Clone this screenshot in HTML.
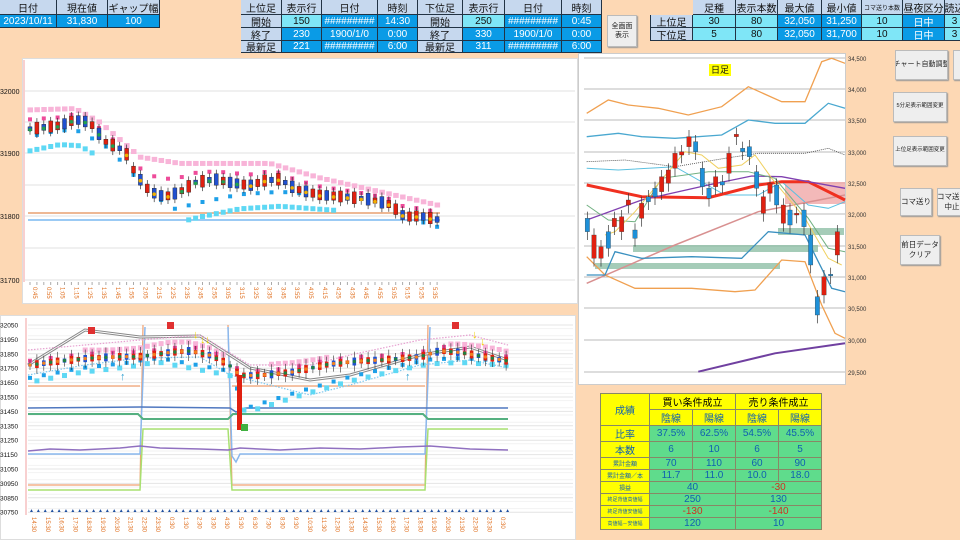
<!DOCTYPE html>
<html><head><meta charset="utf-8"><style>
*{margin:0;padding:0;box-sizing:border-box}
body{width:960px;height:540px;overflow:hidden;background:#fdd8b4;font-family:"Liberation Sans","Noto Sans CJK JP",sans-serif;position:relative}
.c{position:absolute;display:flex;align-items:center;justify-content:center;font-size:10px;border-right:1px solid #234;border-bottom:1px solid #234;white-space:nowrap;overflow:hidden}
.h{background:#c6d8ee;color:#111}
.b{background:#0a9be6;color:#fff}
.l{background:#7fe6f7;color:#111}
.btn{position:absolute;background:#eeeeee;border:1px solid #bbb;box-shadow:1px 1px 1px #999;font-size:8px;display:flex;align-items:center;justify-content:center;text-align:center;line-height:1.3;color:#222;white-space:nowrap;overflow:hidden}
svg{position:absolute;left:0;top:0}
.t td{border:1px solid #886;text-align:center;font-size:10px;padding:0;white-space:nowrap}
</style></head><body>
<div class="c h" style="left:0;top:0;width:57px;height:15px">日付</div>
<div class="c h" style="left:57px;top:0;width:51px;height:15px">現在値</div>
<div class="c h" style="left:108px;top:0;width:52px;height:15px">ギャップ幅</div>
<div class="c b" style="left:0;top:15px;width:57px;height:13px">2023/10/11</div>
<div class="c b" style="left:57px;top:15px;width:51px;height:13px">31,830</div>
<div class="c b" style="left:108px;top:15px;width:52px;height:13px">100</div>
<div class="c h" style="left:241px;top:0;width:41px;height:15px">上位足</div>
<div class="c h" style="left:282px;top:0;width:40px;height:15px">表示行</div>
<div class="c h" style="left:322px;top:0;width:56px;height:15px">日付</div>
<div class="c h" style="left:378px;top:0;width:40px;height:15px">時刻</div>
<div class="c h" style="left:418px;top:0;width:45px;height:15px">下位足</div>
<div class="c h" style="left:463px;top:0;width:42px;height:15px">表示行</div>
<div class="c h" style="left:505px;top:0;width:57px;height:15px">日付</div>
<div class="c h" style="left:562px;top:0;width:40px;height:15px">時刻</div>
<div class="c h" style="left:241px;top:15px;width:41px;height:13px">開始</div>
<div class="c h" style="left:241px;top:28px;width:41px;height:13px">終了</div>
<div class="c h" style="left:241px;top:41px;width:41px;height:12px">最新足</div>
<div class="c l" style="left:282px;top:15px;width:40px;height:13px">150</div>
<div class="c b" style="left:282px;top:28px;width:40px;height:13px">230</div>
<div class="c b" style="left:282px;top:41px;width:40px;height:12px">221</div>
<div class="c b" style="left:322px;top:15px;width:56px;height:13px">#########</div>
<div class="c b" style="left:322px;top:28px;width:56px;height:13px">1900/1/0</div>
<div class="c b" style="left:322px;top:41px;width:56px;height:12px">#########</div>
<div class="c b" style="left:378px;top:15px;width:40px;height:13px">14:30</div>
<div class="c b" style="left:378px;top:28px;width:40px;height:13px">0:00</div>
<div class="c b" style="left:378px;top:41px;width:40px;height:12px">6:00</div>
<div class="c h" style="left:418px;top:15px;width:45px;height:13px">開始</div>
<div class="c h" style="left:418px;top:28px;width:45px;height:13px">終了</div>
<div class="c h" style="left:418px;top:41px;width:45px;height:12px">最新足</div>
<div class="c l" style="left:463px;top:15px;width:42px;height:13px">250</div>
<div class="c b" style="left:463px;top:28px;width:42px;height:13px">330</div>
<div class="c b" style="left:463px;top:41px;width:42px;height:12px">311</div>
<div class="c b" style="left:505px;top:15px;width:57px;height:13px">#########</div>
<div class="c b" style="left:505px;top:28px;width:57px;height:13px">1900/1/0</div>
<div class="c b" style="left:505px;top:41px;width:57px;height:12px">#########</div>
<div class="c b" style="left:562px;top:15px;width:40px;height:13px">0:45</div>
<div class="c b" style="left:562px;top:28px;width:40px;height:13px">0:00</div>
<div class="c b" style="left:562px;top:41px;width:40px;height:12px">6:00</div>
<div class="btn" style="left:607px;top:15px;width:30px;height:32px;font-size:7px">全画面<br>表示</div>
<div class="c h" style="left:693px;top:0;width:43px;height:15px">足種</div>
<div class="c h" style="left:736px;top:0;width:42px;height:15px">表示本数</div>
<div class="c h" style="left:778px;top:0;width:44px;height:15px">最大値</div>
<div class="c h" style="left:822px;top:0;width:40px;height:15px">最小値</div>
<div class="c h" style="left:862px;top:0;width:41px;height:15px;font-size:6px">コマ送り本数</div>
<div class="c h" style="left:903px;top:0;width:42px;height:15px">昼夜区分</div>
<div class="c h" style="left:945px;top:0;width:20px;height:15px">読込</div>
<div class="c h" style="left:650px;top:15px;width:43px;height:13px;border-left:1px solid #234">上位足</div>
<div class="c h" style="left:650px;top:28px;width:43px;height:13px;border-left:1px solid #234">下位足</div>
<div class="c l" style="left:693px;top:15px;width:43px;height:13px">30</div>
<div class="c l" style="left:693px;top:28px;width:43px;height:13px">5</div>
<div class="c l" style="left:736px;top:15px;width:42px;height:13px">80</div>
<div class="c l" style="left:736px;top:28px;width:42px;height:13px">80</div>
<div class="c b" style="left:778px;top:15px;width:44px;height:13px">32,050</div>
<div class="c b" style="left:778px;top:28px;width:44px;height:13px">32,050</div>
<div class="c b" style="left:822px;top:15px;width:40px;height:13px">31,250</div>
<div class="c b" style="left:822px;top:28px;width:40px;height:13px">31,700</div>
<div class="c l" style="left:862px;top:15px;width:41px;height:13px">10</div>
<div class="c l" style="left:862px;top:28px;width:41px;height:13px">10</div>
<div class="c b" style="left:903px;top:15px;width:42px;height:13px">日中</div>
<div class="c b" style="left:903px;top:28px;width:42px;height:13px">日中</div>
<div class="c l" style="left:945px;top:15px;width:20px;height:13px">3</div>
<div class="c l" style="left:945px;top:28px;width:20px;height:13px">3</div>

<div style="position:absolute;left:22px;top:58px;width:556px;height:246px;background:#fff;border:1px solid #ddd"></div>
<div style="position:absolute;left:0;top:315px;width:576px;height:225px;background:#fff;border:1px solid #ddd"></div>
<div style="position:absolute;left:578px;top:53px;width:268px;height:332px;background:#fff;border:1px solid #ccc"></div>

<svg id="s" width="960" height="540" font-family="Liberation Sans" font-size="7">
<g stroke="#e2e2e2" stroke-width="1">
<line x1="25" y1="91" x2="575" y2="91"/><line x1="25" y1="122" x2="575" y2="122"/><line x1="25" y1="153" x2="575" y2="153"/><line x1="25" y1="185" x2="575" y2="185"/><line x1="25" y1="216" x2="575" y2="216"/><line x1="25" y1="248" x2="575" y2="248"/><line x1="25" y1="280" x2="575" y2="280"/>
</g>
<line x1="24" y1="60" x2="24" y2="282" stroke="#f2a0a0"/>
<g fill="#111"><text x="0" y="94">32000</text><text x="0" y="156">31900</text><text x="0" y="219">31800</text><text x="0" y="283">31700</text></g>
<line x1="28" y1="213" x2="440" y2="213" stroke="#e8a070" stroke-width="1.5"/>
<line x1="28" y1="220" x2="440" y2="220" stroke="#7ab8f0" stroke-width="1.5"/>
<g id="top"></g>
<g id="bgrid" stroke="#e4e4e4"></g>
<line x1="26" y1="318" x2="26" y2="515" stroke="#f2a0a0"/>
<g fill="none" stroke-width="1.2">
<path d="M28,386 L140,386 M28,485 L140,485 L143,325 M228,325 L232,485 L425,485 L428,325 M232,386 L425,386" stroke="#f0a070"/>
<path d="M28,490 L140,490 L143,429 L228,429 L232,490 L425,490 L428,429 L508,429" stroke="#a8e070" stroke-width="1.5"/>
<path d="M28,454 L140,454 L145,327 M228,327 L232,456 L236,462 L240,454 L425,454 L430,327" stroke="#8ab8ee" stroke-width="1.5"/>
<path d="M28,408 L140,407 L230,408 L236,412 L245,408 L508,408" stroke="#5078c0" stroke-width="1.5"/>
<path d="M28,414 L138,414 L143,419 L228,419 L233,414 L423,414 L428,419 L508,419" stroke="#55b080" stroke-width="2"/>
<path d="M28,451 L50,449 L80,450 L120,448 L140,446 L160,448 L200,449 L228,450 L240,448 L280,450 L320,448 L360,449 L400,447 L430,446 L470,449 L508,450" stroke="#9070c0" stroke-width="1.5"/>
<path d="M28,365 L85,330 L140,337 L200,336 L250,368 L310,380 L350,375 L420,355 L470,347 L508,360" stroke="#888" stroke-width="3"/>
<path d="M28,365 L85,330 L140,337 L200,336 L250,368 L310,380 L350,375 L420,355 L470,347 L508,360" stroke="#fff" stroke-width="1"/>
<path d="M28,350 L85,345 L140,340 L200,335 L250,365 L310,365 L350,355 L420,340 L470,335 L508,345" stroke="#e6a0d0" stroke-dasharray="1.5,1.5"/>
<path d="M28,375 L85,365 L140,358 L200,357 L230,375 L310,395 L350,385 L420,365 L470,360 L508,368" stroke="#80c8ee" stroke-dasharray="1.5,1.5"/>
</g>
<g id="bot"></g>
<g stroke="#bbb"><line x1="584" y1="58" x2="845" y2="58"/><line x1="584" y1="89" x2="845" y2="89"/><line x1="584" y1="120" x2="845" y2="120"/><line x1="584" y1="152" x2="845" y2="152"/><line x1="584" y1="183" x2="845" y2="183"/><line x1="584" y1="214" x2="845" y2="214"/><line x1="584" y1="246" x2="845" y2="246"/><line x1="584" y1="277" x2="845" y2="277"/><line x1="584" y1="308" x2="845" y2="308"/><line x1="584" y1="340" x2="845" y2="340"/><line x1="584" y1="372" x2="845" y2="372"/></g>
<g fill="#333" font-size="6"><text x="848" y="61">34,500</text><text x="848" y="92">34,000</text><text x="848" y="123">33,500</text><text x="848" y="155">33,000</text><text x="848" y="186">32,500</text><text x="848" y="217">32,000</text><text x="848" y="249">31,500</text><text x="848" y="280">31,000</text><text x="848" y="311">30,500</text><text x="848" y="343">30,000</text><text x="848" y="375">29,500</text></g>
<rect x="785" y="182" width="60" height="22" fill="#f0a8a8" opacity=".8"/>
<rect x="633" y="245" width="185" height="7" fill="#8fbfa6" opacity=".8"/>
<rect x="595" y="263" width="185" height="6" fill="#8fbfa6" opacity=".8"/>
<rect x="778" y="228" width="66" height="7" fill="#8fbfa6" opacity=".8"/>
<g fill="none" id="rl"></g>
<rect x="709" y="64" width="22" height="12" fill="#ffff00"/><text x="711" y="73" font-size="9" fill="#111">日足</text>
<g id="rc"></g>
</svg>

<div class="btn" style="left:895px;top:50px;width:53px;height:30px;font-size:7px">チャート自動調整</div>
<div class="btn" style="left:953px;top:50px;width:12px;height:30px"></div>
<div class="btn" style="left:893px;top:92px;width:54px;height:30px;font-size:5.5px">5分足表示範囲変更</div>
<div class="btn" style="left:893px;top:136px;width:54px;height:30px;font-size:5.5px">上位足表示範囲変更</div>
<div class="btn" style="left:900px;top:188px;width:32px;height:28px;font-size:7.5px">コマ送り</div>
<div class="btn" style="left:937px;top:188px;width:30px;height:28px;font-size:7.5px">コマ送り<br>中止</div>
<div class="btn" style="left:900px;top:235px;width:40px;height:30px;font-size:7.5px">前日データ<br>クリア</div>

<table class="t" style="position:absolute;left:600px;top:393px;width:222px;border-collapse:collapse;background:#ffff00">
<tr style="height:11px"><td rowspan="2" style="width:49px;color:#1060b0">成績</td><td colspan="2">買い条件成立</td><td colspan="2">売り条件成立</td></tr>
<tr style="height:12px;color:#1060b0"><td>陰線</td><td>陽線</td><td>陰線</td><td>陽線</td></tr>
<tr style="height:12px;color:#1060b0"><td>比率</td><td style="background:#5fdc8c">37.5%</td><td style="background:#5fdc8c">62.5%</td><td style="background:#5fdc8c">54.5%</td><td style="background:#5fdc8c">45.5%</td></tr>
<tr style="height:12px;color:#1060b0"><td>本数</td><td style="background:#5fdc8c">6</td><td style="background:#5fdc8c">10</td><td style="background:#5fdc8c">6</td><td style="background:#5fdc8c">5</td></tr>
<tr style="height:12px;color:#1060b0"><td style="font-size:6px">累計金額</td><td style="background:#5fdc8c">70</td><td style="background:#5fdc8c">110</td><td style="background:#5fdc8c">60</td><td style="background:#5fdc8c">90</td></tr>
<tr style="height:11px;color:#1060b0"><td style="font-size:6px">累計金額／本</td><td style="background:#5fdc8c">11.7</td><td style="background:#5fdc8c">11.0</td><td style="background:#5fdc8c">10.0</td><td style="background:#5fdc8c">18.0</td></tr>
<tr style="height:12px;color:#1060b0"><td style="font-size:6px">損益</td><td colspan="2" style="background:#5fdc8c">40</td><td colspan="2" style="background:#5fdc8c;color:#d03020">-30</td></tr>
<tr style="height:12px;color:#1060b0"><td style="font-size:5px">終足背値高値幅</td><td colspan="2" style="background:#5fdc8c">250</td><td colspan="2" style="background:#5fdc8c">130</td></tr>
<tr style="height:12px;color:#1060b0"><td style="font-size:5px">終足背値安値幅</td><td colspan="2" style="background:#5fdc8c;color:#d03020">-130</td><td colspan="2" style="background:#5fdc8c;color:#d03020">-140</td></tr>
<tr style="height:11px;color:#1060b0"><td style="font-size:5px">高値幅－安値幅</td><td colspan="2" style="background:#5fdc8c">120</td><td colspan="2" style="background:#5fdc8c">10</td></tr>
</table>

<script>
var NS="http://www.w3.org/2000/svg";
function el(p,t,a,txt){var e=document.createElementNS(NS,t);for(var k in a)e.setAttribute(k,a[k]);if(txt)e.textContent=txt;p.appendChild(e);return e;}
function interp(pts,x){for(var i=0;i<pts.length-1;i++){if(x>=pts[i][0]&&x<=pts[i+1][0]){var t=(x-pts[i][0])/(pts[i+1][0]-pts[i][0]);return pts[i][1]+t*(pts[i+1][1]-pts[i][1]);}}return pts[pts.length-1][1];}
var g=document.getElementById('top'),s=document.getElementById('s');
var mid=[[30,31940],[60,31945],[75,31955],[90,31950],[105,31920],[125,31905],[135,31870],[150,31840],[165,31832],[180,31840],[195,31855],[215,31860],[230,31855],[250,31850],[265,31858],[280,31860],[295,31845],[320,31835],[345,31832],[370,31828],[390,31820],[405,31800],[420,31802],[440,31795]];
var upl=[[30,31970],[75,31972],[100,31950],[140,31895],[180,31885],[230,31885],[270,31885],[320,31862],[380,31840],[440,31818]];
var dnl=[[30,31920],[60,31930],[80,31928],[110,31900],[150,31830],[175,31805],[200,31815],[240,31828],[280,31832],[340,31825],[380,31815],[410,31790],[440,31775]];
function Y(p){return 91+(32000-p)*0.63;}
for(var i=0;i<60;i++){var x=30+i*6.9;if(x>442)break;var m=interp(mid,x);var ym=Y(m);var u=interp(upl,x),d=interp(dnl,x);
 el(g,'rect',{x:x-2.5,y:Y(u)-2.5,width:5.5,height:5,fill:'#f8b4d8'});
 if(i%2==0)el(g,'rect',{x:x-2,y:Y((u+m)/2)-2,width:4,height:4,fill:'#ee4c9a'});
 if(i%2==1)el(g,'rect',{x:x-2,y:Y(d+8)-2,width:4,height:4,fill:'#1ea0e8'});
 if(i<10||(i>22&&i<45)) el(g,'rect',{x:x-2.5,y:Y(d-15)-2.5,width:5,height:5,fill:'#5ed8f4'});
 var h=4+8*Math.abs(Math.sin(i*1.7));var up=Math.sin(i*2.3)>0;
 el(g,'line',{x1:x,y1:ym-h/2-4,x2:x,y2:ym+h/2+4,stroke:'#333','stroke-width':.7});
 el(g,'rect',{x:x-2,y:ym-h/2,width:4,height:h,fill:up?'#e02010':'#2050d0',stroke:'#222','stroke-width':.4});
 if(i%2==0)el(g,'circle',{cx:x,cy:ym+1,r:1.8,fill:(x<120||(x>180&&x<240))?'#20a050':'#f0b000'});
 el(g,'line',{x1:x,y1:282,x2:x,y2:285,stroke:'#aaa'});
 if(i%2==0)el(g,'text',{x:x+3,y:287,fill:'#e07020','font-size':6,transform:'rotate(90 '+(x+3)+' 287)'},(Math.floor((45+i*5)/60))+':'+('0'+((45+i*5)%60)).slice(-2));
}
var bg=document.getElementById('bgrid');var labs=[32050,31950,31850,31750,31650,31550,31450,31350,31250,31150,31050,30950,30850,30750];
for(var j=0;j<labs.length;j++){var y=325+j*14.4;el(bg,'line',{x1:28,y1:y,x2:573,y2:y});el(s,'text',{x:0,y:y+2.5,fill:'#111','font-size':6.5},String(labs[j]));}
for(var j=0;j<26;j++){el(bg,'line',{x1:28,y1:325+j*7.2+3.6,x2:573,y2:325+j*7.2+3.6,stroke:'#f2f2f2'});}
var b=document.getElementById('bot');
var bm=[[28,31770],[60,31800],[90,31820],[120,31830],[140,31830],[170,31860],[190,31870],[210,31840],[228,31780],[240,31700],[260,31700],[290,31720],[330,31780],[360,31800],[390,31810],[420,31830],[440,31870],[460,31860],[508,31800]];
var bl=[[28,31650],[80,31720],[130,31760],[145,31780],[160,31790],[230,31700],[245,31440],[300,31560],[350,31660],[400,31740],[430,31780],[460,31790],[508,31770]];
function BY(p){return 325+(32050-p)*0.144;}
for(var i=0;i<70;i++){var x=30+i*6.9;if(x>508)break;var m=interp(bm,x);var ym=BY(m);var lo=interp(bl,x);
 if((x>80&&x<228)||(x>270&&x<330)||x>450) el(b,'rect',{x:x-2.5,y:BY(m+60+10*Math.sin(i*.4))-2.5,width:5,height:5,fill:'#f8b4d8'});
 if(i%3==0)el(b,'rect',{x:x-2,y:BY(m+30)-2,width:4,height:4,fill:'#ee4c9a'});
 if(i%2==0)el(b,'rect',{x:x-2,y:BY(lo+30)-2,width:4,height:4,fill:'#1ea0e8'});
 if(i%2==1)el(b,'rect',{x:x-2.5,y:BY(lo)-2.5,width:5,height:5,fill:'#5ed8f4'});
 var h=3+5*Math.abs(Math.sin(i*1.3));var up=Math.sin(i*2.1)>0;
 el(b,'line',{x1:x,y1:ym-h-2,x2:x,y2:ym+h+2,stroke:'#333','stroke-width':.6});
 el(b,'rect',{x:x-1.8,y:ym-h/2,width:3.6,height:h,fill:up?'#e02010':'#2050d0'});
 el(b,'circle',{cx:x,cy:ym,r:1.7,fill:i%2?'#208040':'#f08020'});
 el(b,'text',{x:x-1,y:512,fill:'#2050a0','font-size':5},'▲');
 if(i%2==0)el(b,'text',{x:x+2,y:517,fill:'#e07020','font-size':6,transform:'rotate(90 '+(x+2)+' 517)'},((14+Math.floor(i/2))%24)+':30');
}
el(b,'rect',{x:237,y:375,width:5,height:55,fill:'#e02010'});
el(b,'rect',{x:241,y:424,width:7,height:7,fill:'#40b040'});
[[88,327],[167,322],[452,322]].forEach(function(p){el(b,'rect',{x:p[0],y:p[1],width:7,height:7,fill:'#e03030'});});
[[193,338],[200,343],[205,343],[472,338],[480,345]].forEach(function(p){el(b,'text',{x:p[0],y:p[1],fill:'#f0d000','font-size':11},'↓');});
[[120,380],[405,380]].forEach(function(p){el(b,'text',{x:p[0],y:p[1],fill:'#30a0d0','font-size':11},'↑');});
var rl=document.getElementById('rl');
function RP(a){return a.map(function(p){return (575+p[0]/3).toFixed(1)+','+(45+p[1]/3).toFixed(1);}).join(' ');}
var L=[
[[[35,205],[100,165],[160,180],[250,190],[340,210],[440,185],[520,125],[620,170],[690,170],[740,50],[770,40],[810,55]],'#f0a050',1.3],
[[[35,275],[130,265],[200,275],[300,280],[440,270],[520,225],[600,235],[690,235],[760,175],[810,190]],'#4aa8d0',1.3],
[[[35,350],[150,345],[300,365],[450,340],[550,325],[690,325],[760,310],[810,330]],'#444',0.8,'1,1'],
[[[35,370],[130,375],[300,365],[450,450],[550,450],[620,410],[700,480],[760,490],[810,470]],'#5ac0e0',1],
[[[35,715],[300,600],[550,500],[810,450]],'#d89090',1.5],
[[[35,420],[200,455],[400,458],[550,420],[620,410],[700,410],[810,465]],'#f03020',3],
[[[35,525],[200,465],[400,420],[530,393],[620,395],[700,410],[810,430]],'#8040b0',1.3],
[[[35,635],[90,690],[180,730],[350,730],[480,740],[540,735],[620,645],[690,650],[740,780],[780,865],[810,880]],'#f0a050',1.3],
[[[35,690],[90,690],[120,620],[200,640],[350,635],[500,640],[580,560],[690,570],[730,650],[770,730],[810,740]],'#3a90c0',1.3],
[[[35,480],[100,525],[180,530],[260,400],[400,380],[520,380],[600,400],[700,520],[760,610],[810,620]],'#70b080',1],
[[[90,570],[120,560],[180,500],[330,320],[380,330],[430,370],[500,360],[540,330],[590,400],[690,520],[760,640],[800,660]],'#f0d060',1],
[[[370,980],[600,925],[810,895]],'#7040a0',2]];
L.forEach(function(l){var a={points:RP(l[0]),stroke:l[1],'stroke-width':l[2],fill:'none'};if(l[3])a['stroke-dasharray']=l[3];el(rl,'polyline',a);});
var rc=document.getElementById('rc');
var cs=[[37,520,560,0],[57,570,640,1],[78,605,640,1],[100,560,610,0],[118,520,545,1],[140,515,560,1],[160,465,480,1],[180,555,580,0],[200,475,520,1],[220,455,470,0],[240,430,455,0],[260,395,440,1],[280,375,415,1],[300,325,370,1],[320,320,330,1],[342,275,305,1],[362,290,320,0],[382,370,425,0],[402,430,460,0],[422,395,425,1],[442,410,420,0],[462,325,385,1],[484,268,275,1],[503,310,320,0],[523,305,335,0],[545,380,430,0],[565,455,505,1],[585,415,445,1],[605,420,480,0],[625,480,535,1],[645,495,540,0],[665,505,510,1],[687,495,545,0],[707,570,660,0],[727,755,810,0],[747,695,750,1],[767,688,692,0],[787,560,630,1]];
cs.forEach(function(c){var x=575+c[0]/3;el(rc,'line',{x1:x,y1:45+(c[1]-20)/3,x2:x,y2:45+(c[2]+25)/3,stroke:'#333','stroke-width':.7});el(rc,'rect',{x:x-2.2,y:45+c[1]/3,width:4.4,height:Math.max(1.5,(c[2]-c[1])/3),fill:c[3]?'#e02010':'#1e90d8',stroke:'#333','stroke-width':.3});});
</script>
</body></html>
